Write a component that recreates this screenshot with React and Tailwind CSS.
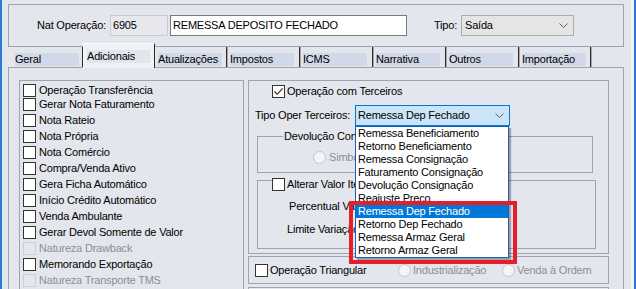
import React from "react";

const leftOptions = [
  { label: "Operação Transferência" },
  { label: "Gerar Nota Faturamento" },
  { label: "Nota Rateio" },
  { label: "Nota Própria" },
  { label: "Nota Comércio" },
  { label: "Compra/Venda Ativo" },
  { label: "Gera Ficha Automático" },
  { label: "Início Crédito Automático" },
  { label: "Venda Ambulante" },
  { label: "Gerar Devol Somente de Valor" },
  { label: "Natureza Drawback", disabled: true },
  { label: "Memorando Exportação" },
  { label: "Natureza Transporte TMS", disabled: true },
];

const tabs = [
  { label: "Geral", w: "w-[71px]" },
  { label: "Adicionais", active: true },
  { label: "Atualizações", w: "w-[72px]" },
  { label: "Impostos", w: "w-[73px]" },
  { label: "ICMS", w: "w-[73px]" },
  { label: "Narrativa", w: "w-[73px]" },
  { label: "Outros", w: "w-[73px]" },
  { label: "Importação", w: "w-[72px]" },
];

const tipoOptions = [
  "Remessa Beneficiamento",
  "Retorno Beneficiamento",
  "Remessa Consignação",
  "Faturamento Consignação",
  "Devolução Consignação",
  "Reajuste Preço",
  "Remessa Dep Fechado",
  "Retorno Dep Fechado",
  "Remessa Armaz Geral",
  "Retorno Armaz Geral",
];

function CheckBox({ checked = false, disabled = false }) {
  return (
    <span
      className={`flex h-[13px] w-[13px] shrink-0 items-center justify-center border ${
        disabled ? "border-[#cbced4]" : "border-[#333333] bg-white"
      }`}
    >
      {checked && (
        <svg width="11" height="11" viewBox="0 0 11 11">
          <path d="M1.5 5.5l2.8 2.8L9.6 2.4" fill="none" stroke="#1f1f1f" strokeWidth="1.1" />
        </svg>
      )}
    </span>
  );
}

function Radio() {
  return <span className="h-[13px] w-[13px] shrink-0 rounded-full border border-[#c4c6cb] bg-[#f4f4f4]" />;
}

function Chevron({ color = "#606060" }) {
  return (
    <svg width="9" height="5" viewBox="0 0 9 5">
      <path d="M0.5 0.5l4 4 4-4" fill="none" stroke={color} strokeWidth="1" />
    </svg>
  );
}

export default function App() {
  return (
    <div className="relative flex h-[289px] w-[636px] overflow-hidden bg-[#e3e6ed] font-['Liberation_Sans',Arial,sans-serif] text-[11px] leading-[13px] tracking-[-0.2px] text-black">
      <div className="w-[2px] shrink-0 bg-[#2a7bd4]" />

      <div className="flex w-[629px] shrink-0 flex-col">
        {/* Header */}
        <div className="ml-[6px] mt-[4px] flex h-[43px] w-[616px] shrink-0 items-center border border-[#9ea4ae] pl-[28px]">
          <span className="w-[73px]">Nat Operação:</span>
          <div className="flex h-[21px] w-[58px] items-center border border-[#c9cbd0] bg-[#e6e8ee] pl-[2px]">6905</div>
          <div className="ml-[2px] flex h-[21px] w-[237px] items-center border border-[#7a7a7a] bg-white pl-[2px]">
            REMESSA DEPOSITO FECHADO
          </div>
          <span className="ml-[27px] w-[27px]">Tipo:</span>
          <div className="flex h-[21px] w-[113px] items-center justify-between border border-[#adadad] bg-[#e5e5e5] pl-[3px] pr-[5px]">
            <span>Saída</span>
            <Chevron />
          </div>
        </div>

        {/* Tabs */}
        <div className="-mt-[4px] flex h-[24px] shrink-0 items-end pl-[10px]">
          {tabs.map((t) =>
            t.active ? (
              <div
                key={t.label}
                className="relative z-10 -mb-[1px] h-[25px] w-[72px] border-x border-t border-l-white border-t-white border-r-[#2b2b2b] bg-[#f0f1f4] pl-[3px] pt-[6px]"
              >
                <span className="block h-[13px] w-[63px] bg-[#e1e5ee]">{t.label}</span>
              </div>
            ) : (
              <div
                key={t.label}
                className={`${t.w} flex h-[20px] items-end border-r border-[#2b2b2b] pb-[1px] shadow-[1px_0_0_#a3a7ae]`}
              >
                <span className="ml-[3px] h-[13px] w-[64px] bg-[#d1d9e9]">{t.label}</span>
              </div>
            )
          )}
        </div>

        {/* Tab page */}
        <div className="ml-[6px] flex w-[616px] flex-1 border-x border-t border-[#9ea4ae] pl-[10px] pt-[12px]">
          <div className="h-[230px] w-[225px] shrink-0 border border-[#9ea4ae] pl-[3px] pt-[3px]">
            {leftOptions.map((o, i) => (
              <div key={o.label} className={`flex gap-[3px] ${i === 0 ? "h-[14px]" : "h-[16px]"}`}>
                <CheckBox disabled={o.disabled} />
                <span className={`whitespace-nowrap ${o.disabled ? "text-[#8d8f94]" : ""}`}>{o.label}</span>
              </div>
            ))}
          </div>

          <div className="ml-[4px] flex w-[361px] shrink-0 flex-col">
            <div className="h-[174px] border border-[#9ea4ae]">
              <div className="ml-[23px] mt-[4px] flex h-[13px] items-center gap-[2px]">
                <CheckBox checked />
                <span>Operação com Terceiros</span>
              </div>

              <div className="mt-[7px] flex items-start pl-[6px]">
                <span className="w-[100px] leading-[21px]">Tipo Oper Terceiros:</span>
                <div className="relative z-20">
                  <div className="flex h-[21px] w-[155px] items-center justify-between border border-[#0078d7] bg-[#cce4f7] pl-[2px] pr-[5px]">
                    <span>Remessa Dep Fechado</span>
                    <Chevron />
                  </div>
                  <div className="absolute left-0 top-full w-[154px] border border-[#1a5fb4] bg-white shadow-[2px_2px_1px_rgba(0,0,0,0.3)]">
                    {tipoOptions.map((opt) => (
                      <div
                        key={opt}
                        className={`h-[13px] whitespace-nowrap pl-[2px] ${
                          opt === "Remessa Dep Fechado" ? "bg-[#0078d7] text-white" : ""
                        }`}
                      >
                        {opt}
                      </div>
                    ))}
                  </div>
                </div>
              </div>

              {/* Devolução group */}
              <div className="ml-[8px] mt-[10px] h-[37px] w-[336px] border border-[#9ea4ae]">
                <span className="-mt-[7px] ml-[25px] block w-fit bg-[#e3e6ed] px-[1px]">Devolução Consignação</span>
                <div className="ml-[55px] mt-[8px] flex items-center gap-[3px] text-[#8d8f94]">
                  <Radio />
                  <span>Simbólica</span>
                </div>
              </div>

              {/* Alterar group */}
              <div className="ml-[8px] mt-[7px] h-[69px] w-[339px] border border-[#9ea4ae]">
                <div className="-mt-[3px] ml-[14px] flex w-fit items-center gap-[2px] bg-[#e3e6ed] pr-[1px]">
                  <CheckBox />
                  <span>Alterar Valor Item</span>
                </div>
                <div className="ml-[31px] mt-[9px]">Percentual Variação:</div>
                <div className="ml-[29px] mt-[10px]">Limite Variação:</div>
              </div>
            </div>

            <div className="mt-[2px] flex h-[28px] items-center border border-[#9ea4ae] pl-[6px]">
              <div className="flex w-[143px] items-center gap-[2px]">
                <CheckBox />
                <span>Operação Triangular</span>
              </div>
              <div className="flex w-[104px] items-center gap-[2px] text-[#8d8f94]">
                <Radio />
                <span>Industrialização</span>
              </div>
              <div className="flex items-center gap-[2px] text-[#8d8f94]">
                <Radio />
                <span>Venda à Ordem</span>
              </div>
            </div>

            <div className="mt-[3px] h-[20px] border border-[#9ea4ae]" />
          </div>
        </div>
      </div>

      <div className="w-[3px] shrink-0 bg-[#f2f3f5]" />
      <div className="w-[2px] shrink-0 bg-[#2a7bd4]" />

      {/* annotation highlight */}
      <div className="absolute left-[349px] top-[201px] z-30 h-[63px] w-[168px] border-[4px] border-[#e51f2a]" />
    </div>
  );
}
